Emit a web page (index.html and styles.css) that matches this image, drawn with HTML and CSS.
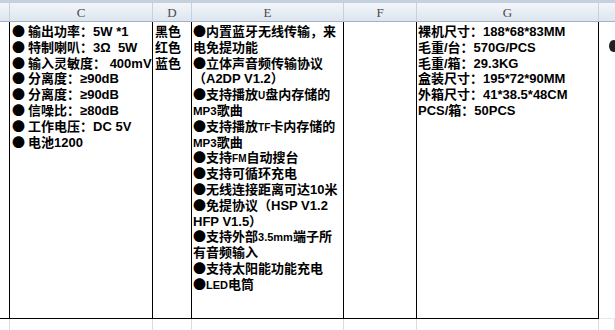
FILE: index.html
```html
<!DOCTYPE html>
<html>
<head>
<meta charset="utf-8">
<link rel="stylesheet" href="styles.css">
</head>
<body>
<div class="sheet">
  <div class="hd"></div>
  <div class="hd">C</div>
  <div class="hd">D</div>
  <div class="hd">E</div>
  <div class="hd">F</div>
  <div class="hd">G</div>
  <div class="hd last"></div>

  <div class="cell colb"></div>
  <div class="cell data c">
    <div class="ln"><span class="b">●</span>输出功率：5W *1</div>
    <div class="ln"><span class="b">●</span>特制喇叭：3Ω&nbsp; 5W</div>
    <div class="ln"><span class="b">●</span>输入灵敏度： 400mV</div>
    <div class="ln"><span class="b">●</span>分离度：≥90dB</div>
    <div class="ln"><span class="b">●</span>分离度：≥90dB</div>
    <div class="ln"><span class="b">●</span>信噪比：≥80dB</div>
    <div class="ln"><span class="b">●</span>工作电压：DC 5V</div>
    <div class="ln"><span class="b">●</span>电池1200</div>
  </div>
  <div class="cell data">
    <div class="ln">黑色</div>
    <div class="ln">红色</div>
    <div class="ln">蓝色</div>
  </div>
  <div class="cell data e">
    <div class="ln"><span class="b">●</span>内置蓝牙无线传输，来</div>
    <div class="ln">电免提功能</div>
    <div class="ln"><span class="b">●</span>立体声音频传输协议</div>
    <div class="ln">（A2DP V1.2）</div>
    <div class="ln"><span class="b">●</span>支持播放<span class="xs">U</span>盘内存储的</div>
    <div class="ln"><span class="md">MP3</span>歌曲</div>
    <div class="ln"><span class="b">●</span>支持播放<span class="xs">TF</span>卡内存储的</div>
    <div class="ln"><span class="md">MP3</span>歌曲</div>
    <div class="ln"><span class="b">●</span>支持<span class="xs">FM</span>自动搜台</div>
    <div class="ln"><span class="b">●</span>支持可循环充电</div>
    <div class="ln"><span class="b">●</span>无线连接距离可达10米</div>
    <div class="ln"><span class="b">●</span>免提协议（HSP V1.2</div>
    <div class="ln">HFP V1.5）</div>
    <div class="ln"><span class="b">●</span>支持外部<span class="sm">3.5mm</span>端子所</div>
    <div class="ln">有音频输入</div>
    <div class="ln"><span class="b">●</span>支持太阳能功能充电</div>
    <div class="ln"><span class="b">●</span><span class="sm">LED</span>电筒</div>
  </div>
  <div class="cell data"></div>
  <div class="cell data g">
    <div class="ln">裸机尺寸：188*68*83MM</div>
    <div class="ln">毛重/台：570G/PCS</div>
    <div class="ln">毛重/箱：29.3KG</div>
    <div class="ln">盒装尺寸：195*72*90MM</div>
    <div class="ln">外箱尺寸：41*38.5*48CM</div>
    <div class="ln">PCS/箱：50PCS</div>
  </div>
  <div class="cell colh"><span class="blob"></span></div>

  <div class="ft"></div>
  <div class="ft"></div>
  <div class="ft"></div>
  <div class="ft"></div>
  <div class="ft"></div>
  <div class="ft"></div>
  <div class="ft"></div>
</div>
</body>
</html>
```

FILE: styles.css
```css
* { box-sizing: border-box; }
html, body { margin: 0; padding: 0; background: #fff; }
.sheet {
  width: 615px;
  height: 330px;
  overflow: hidden;
  display: grid;
  grid-template-columns: 10px 143px 39px 152px 73px 182px 16px;
  grid-template-rows: 22px 297px 11px;
  font-family: "Liberation Sans", "Noto Sans CJK SC", sans-serif;
  font-weight: bold;
  font-size: 13px;
  color: #000;
}
.hd {
  background: linear-gradient(#f3f6fa, #dde5ef);
  border-top: 3px solid #c4d0de;
  border-bottom: 1px solid #9fb2c8;
  border-right: 1px solid #c5d2e0;
  font-family: "Liberation Serif", serif;
  font-weight: normal;
  font-size: 13px;
  color: #4a4a4a;
  display: flex;
  align-items: center;
  justify-content: center;
  padding-top: 1px;
}
.hd.last { border-right: none; }
.cell {
  border-bottom: 1px solid #000;
  border-right: 1px solid #000;
  white-space: nowrap;
  overflow: hidden;
}
.ln {
  height: 15.8px;
  line-height: 15.8px;
}
.ln > span { line-height: 1; }
.data { padding: 2px 0 0 2px; }
.e { padding-left: 1px; }
.g { padding-left: 1px; }
.c .b { margin-right: 3px; }
.colh {
  border-right: none;
  border-bottom: 1px solid #e6e6e6;
  position: relative;
  overflow: visible;
}
.b {
  font-family: "Noto Sans CJK SC", sans-serif;
  font-weight: bold;
  font-size: 13px;
}
.md { font-size: 11.5px; }
.sm { font-size: 11px; }
.xs { font-size: 10px; }
.blob {
  position: absolute;
  left: 10px;
  top: 18px;
  width: 9px;
  height: 12px;
  border-radius: 50%;
  background: #222;
}
.ft {
  border-right: 1px solid #dadcdd;
}
```
